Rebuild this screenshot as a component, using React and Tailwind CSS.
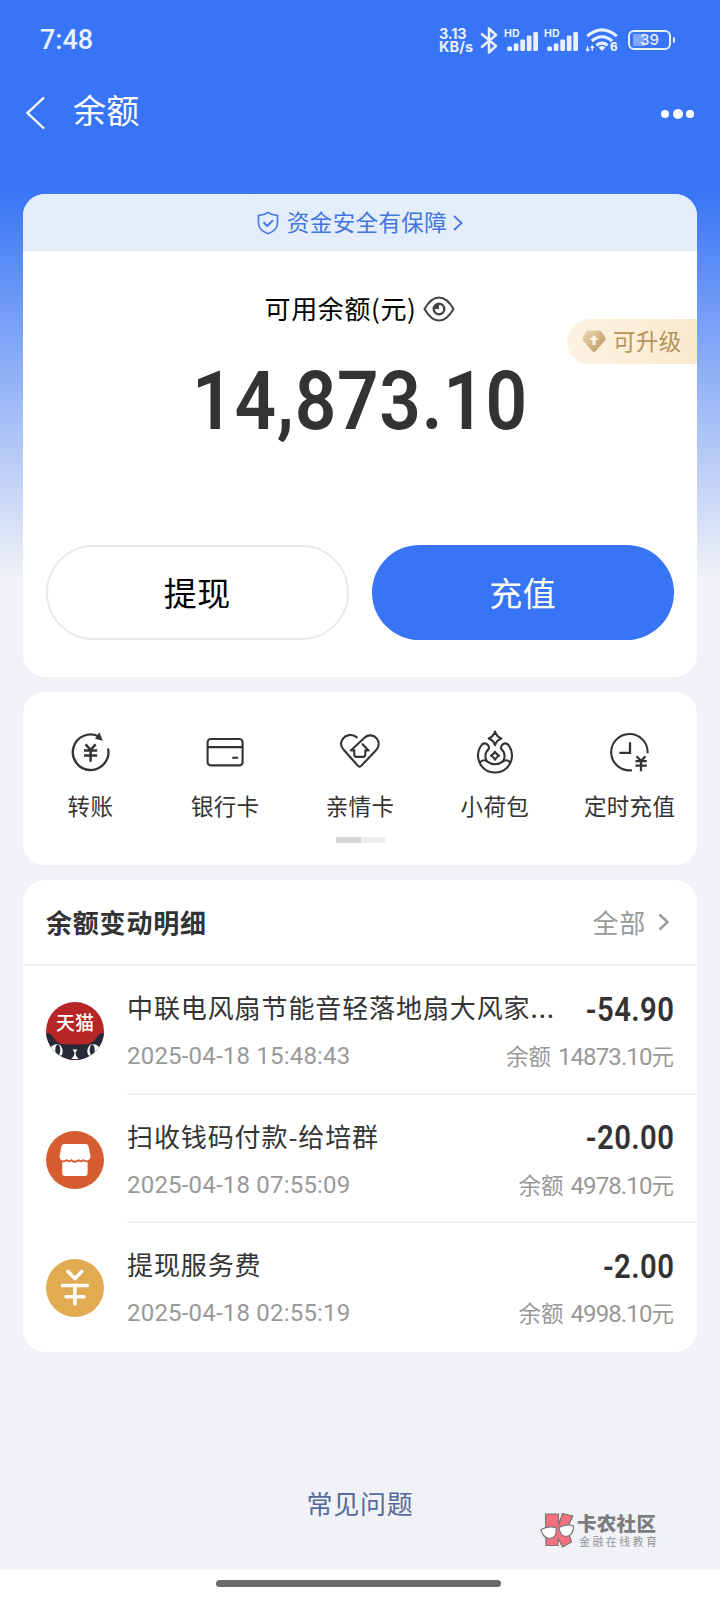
import React from 'react';

const services = [
  { label: '转账', Icon: TransferIcon },
  { label: '银行卡', Icon: BankCardIcon },
  { label: '亲情卡', Icon: FamilyIcon },
  { label: '小荷包', Icon: PurseIcon },
  { label: '定时充值', Icon: TimedIcon },
];

const records = [
  { title: '中联电风扇节能音轻落地扇大风家...', time: '2025-04-18 15:48:43', amount: '-54.90', balance: '14873.10', Icon: TmallIcon },
  { title: '扫收钱码付款-给培群', time: '2025-04-18 07:55:09', amount: '-20.00', balance: '4978.10', Icon: ShopIcon },
  { title: '提现服务费', time: '2025-04-18 02:55:19', amount: '-2.00', balance: '4998.10', Icon: FeeIcon },
];

function TransferIcon() {
  return (
    <svg className="w-10 h-10 overflow-visible" viewBox="0 0 40 40" fill="none" stroke="#333" strokeWidth="2.3">
      <path d="M38 16.4A17.8 17.8 0 1 1 29.500 4.8" />
      <path d="M29.400 .2L32.800 8.800L25 6.800z" fill="#333" stroke="none" />
      <path d="M15.600 12.400L20.600 17.800L25.600 12.400M14 18.600H27.200M14 23.400H27.200M20.600 18V29.800" strokeWidth="2.500" />
    </svg>
  );
}

function BankCardIcon() {
  return (
    <svg className="w-10 h-10" viewBox="0 0 40 40" fill="none" stroke="#333" strokeWidth="2.1">
      <rect x="2.600" y="7" width="35" height="26.400" rx="3.200" />
      <path d="M2.600 15.100H37.600M27.200 25.800H33.200" />
    </svg>
  );
}

function FamilyIcon() {
  return (
    <svg className="w-10 h-10 overflow-visible" viewBox="0 0 40 40" fill="none" stroke="#333" strokeWidth="2.1" strokeLinecap="round" strokeLinejoin="round">
      <path d="M16.8 5.3C11.6 1.4 5.6 3 3 6.6C.2 10.4 .6 14.6 3.9 18L17.6 33.4Q19.5 36 21.6 33.4L36 18.2C39.2 14.6 39.6 10 36.8 6.6C33.6 2.8 28.4 2.3 24.8 5.4L10.8 18.4H14.3V22.8Q14.3 24.9 16.4 24.9H23.2Q25.3 24.9 25.3 22.8V18.4H28.6L22.6 12.2" />
    </svg>
  );
}

function PurseIcon() {
  return (
    <svg className="w-10 h-10 overflow-visible" viewBox="0 0 40 40" fill="none" stroke="#333" strokeWidth="2.1" strokeLinejoin="round">
      <path d="M20 -.4Q21.4 4.8 26.4 6.4Q21.4 8 20 13.2Q18.6 8 13.6 6.4Q18.6 4.8 20 -.4z" />
      <path d="M7 12.6A17 17 0 1 0 33 12.6C30 10 25.600 12.200 26 16.400C28 18.400 29.600 20.600 29.600 24Q29.600 27 27.800 29.400M7 12.6C10 10 14.400 12.200 14 16.400C12 18.400 10.400 20.600 10.400 24Q10.400 27 12.200 29.400" />
      <path d="M4.600 30.600Q8.200 26.600 12 29.400Q15.600 32.200 20 32.200T28 29.400Q31.800 26.600 35.400 30.600" />
      <path d="M20 19.700Q21.400 22.200 24 23.700Q21.400 25.200 20 27.700Q18.600 25.200 16 23.700Q18.600 22.200 20 19.700z" />
    </svg>
  );
}

function TimedIcon() {
  return (
    <svg className="w-10 h-10 overflow-visible" viewBox="0 0 40 40" fill="none" stroke="#333" strokeWidth="2.1">
      <path d="M37.600 21.200A18.200 18.200 0 1 0 22 38.200" />
      <path d="M20 10.200V20.900H9.400" strokeWidth="2.300" />
      <path d="M26.600 24.200L31 29L35.400 24.200M25.400 29.200H36.800M25.400 33.600H36.800M31 29V39.200" strokeWidth="2.300" />
    </svg>
  );
}

function TmallIcon() {
  return (
    <div className="relative w-[58px] h-[58px] rounded-full overflow-hidden bg-[#b72626]">
      <svg className="absolute inset-0" viewBox="0 0 58 58">
        <path d="M0 31Q4 30.600 6 33.500Q10 40.500 15 42Q29 43 43 42Q49 39 52 33.500Q54 30.600 58 31V58H0z" fill="#262938" />
        <path d="M3 47Q8 40.500 14 43Q18 47 16 53Q10 57 3 47zM55 47Q50 40.500 44 43Q40 47 42 53Q48 57 55 47z" fill="#fff" />
        <ellipse cx="11.800" cy="48" rx="2.500" ry="5.500" fill="#262938" />
        <ellipse cx="46.200" cy="48" rx="2.500" ry="5.500" fill="#262938" />
        <path d="M26.500 47.500H31.500L29.700 50V53L32.500 57H25.500L28.300 53V50z" fill="#fff" />
      </svg>
      <span className="absolute left-0 top-2 w-full text-center text-[19px] leading-6 font-medium text-white">天猫</span>
    </div>
  );
}

function ShopIcon() {
  return (
    <svg className="w-[58px] h-[58px]" viewBox="0 0 58 58">
      <circle cx="29" cy="29" r="29" fill="#d65d30" />
      <path d="M18.500 13H39.500Q42 13 42.600 15.400L44.400 25Q44.400 29 41 29.400Q38.400 29.400 37.200 28Q35 30.600 32.600 28Q29 31.500 25.200 28Q23 30.600 20.600 28Q19.400 29.400 16.600 29.400Q13.400 29 13.600 25L15.400 15.400Q16 13 18.500 13z" fill="#fff" />
      <path d="M16.200 31.300Q18.600 31.400 20.600 30.200Q23 32.400 25.200 30.200Q29 33.400 32.600 30.200Q35 32.400 37.200 30.200Q39.200 31.400 41.600 31.300V42.600Q41.600 45 39.200 45H18.600Q16.200 45 16.200 42.600z" fill="#fff" />
    </svg>
  );
}

function FeeIcon() {
  return (
    <svg className="w-[58px] h-[58px]" viewBox="0 0 58 58" fill="none" stroke="#fff" strokeWidth="3.500" strokeLinecap="round" strokeLinejoin="round">
      <circle cx="29" cy="29" r="29" fill="#e1ab52" stroke="none" />
      <path d="M22 12.400L28.900 19.400L35.800 12.400M16.400 26.600H41.400M20 37.700H38M28.900 26.600V45" />
    </svg>
  );
}

function Signal() {
  return (
    <svg className="w-[34px] h-6" viewBox="0 0 34 24" fill="#e9f0ff">
      <text x="0" y="9.300" fontSize="10.800" fontWeight="700" fontFamily="Inter" textLength="15.500" lengthAdjust="spacingAndGlyphs">HD</text>
      <rect x="3.300" y="18.500" width="4.700" height="4.500" rx="1.200" />
      <rect x="9.800" y="15.500" width="4.700" height="7.500" rx="1.200" />
      <rect x="16.300" y="11.500" width="4.700" height="11.500" rx="1.200" />
      <rect x="22.800" y="7.500" width="4.700" height="15.500" rx="1.200" />
      <rect x="29.300" y="4" width="4.700" height="19" rx="1.200" />
    </svg>
  );
}

function StatusBar() {
  return (
    <div className="h-20 pl-10 pr-[45px] flex items-center justify-between text-[#e9f0ff]">
      <span className="text-[27px] leading-8 font-medium font-['Roboto']">7:48</span>
      <div className="flex items-center">
        <div className="w-[41px] flex flex-col font-['Inter'] font-bold text-[14.5px] leading-[13px] whitespace-nowrap">
          <span className="tracking-[-0.2px]">3.13</span>
          <span className="tracking-[0.1px]">KB/s</span>
        </div>
        <svg className="w-[18px] h-[27px] mr-1.5" viewBox="0 0 18 27" fill="none" stroke="#e9f0ff" strokeWidth="2.500" strokeLinejoin="round">
          <path d="M1.200 6.500L16 19L9 25.500V1.500L16 8L1.200 20.500" />
        </svg>
        <Signal />
        <div className="w-1.5" />
        <Signal />
        <svg className="w-8 h-6 ml-2 mr-2.5 overflow-visible" viewBox="0 0 32 24" fill="none" stroke="#e9f0ff" strokeWidth="3">
          <path d="M1.200 8.200Q16 -4.400 30.800 8.200M5.800 13Q16 4.600 26.200 13M10.400 17.200Q16 13 21.600 17.200" />
          <path d="M12.500 19.500Q16 16.500 19.500 19.500L16 23z" fill="#e9f0ff" stroke="none" />
          <path d="M1.500 18V22.500M0 21L1.700 23L3.300 21M6.200 23V18.200M4.800 20L6.200 18L8 20" strokeWidth="1.300" />
          <text x="24" y="23" fontSize="11.500" fontWeight="800" fontFamily="Inter" fill="#e9f0ff" stroke="none">6</text>
        </svg>
        <div className="relative w-[43px] h-5 rounded-md border-2 border-[#e9f0ff] overflow-hidden flex items-center justify-center">
          <div className="absolute left-[3px] top-0.5 bottom-0.5 w-3 rounded-l-[2px] bg-[#7fa6fc]" />
          <span className="relative font-['Inter'] text-[15px] leading-4 font-medium">39</span>
        </div>
        <div className="w-0.5 h-1.5 ml-0.5 rounded-r bg-[#e9f0ff]" />
      </div>
    </div>
  );
}

function NavBar() {
  return (
    <div className="h-[114px] pl-[25px] pr-[26px] pt-3 flex items-start justify-between">
      <div className="flex items-center">
        <svg className="w-5 h-[34px] mt-1" viewBox="0 0 20 34" fill="none" stroke="#fff" strokeWidth="2.400">
          <path d="M19 1.500L2.500 17L19 32.500" />
        </svg>
        <h1 className="ml-7 text-[33px] leading-8 text-white tracking-[0.3px] -mt-1">余额</h1>
      </div>
      <div className="mt-[17px] flex items-center gap-[3.5px]">
        <span className="w-2 h-2 rounded-full bg-white" />
        <span className="w-2.5 h-2.5 rounded-full bg-white" />
        <span className="w-2 h-2 rounded-full bg-white" />
      </div>
    </div>
  );
}

function BalanceCard() {
  return (
    <section className="relative h-[483px] rounded-[22px] bg-white overflow-hidden">
      <div className="h-[57px] bg-[#e4eefb] flex items-center justify-center text-[#4275e0]">
        <svg className="w-[22px] h-6" viewBox="0 0 22 24" fill="none" stroke="#4b7ce4" strokeWidth="1.700" strokeLinejoin="round">
          <path d="M11 1.300Q14.500 4 20.500 4.300V12.500Q20 19.500 11 22.700Q2 19.500 1.500 12.500V4.300Q7.500 4 11 1.300z" />
          <path d="M6.500 11.200L10.200 15L16 9.200" strokeWidth="2" />
        </svg>
        <span className="ml-2 text-[22.5px] leading-8 tracking-[0.4px] pb-[3px]">资金安全有保障</span>
        <svg className="w-2.5 h-4 ml-1.5" viewBox="0 0 10 16" fill="none" stroke="#4275e0" strokeWidth="1.800">
          <path d="M1 1L8.500 8L1 15" />
        </svg>
      </div>

      <div className="mt-[37px] h-10 flex items-center justify-center text-black">
        <span className="text-[26px] leading-10 tracking-[0.6px]">可用余额(元)</span>
        <svg className="w-8 h-[26px] ml-[7px] mt-0.5" viewBox="0 0 32 26" fill="none" stroke="#444" strokeWidth="2">
          <path d="M1.500 13Q8 1.500 16 1.500T30.500 13Q24 24.500 16 24.500T1.500 13z" strokeLinejoin="round" />
          <circle cx="16" cy="13" r="5.300" strokeWidth="2.400" />
          <path d="M16 8V13H11A5 5 0 0 1 16 8z" fill="#444" stroke="none" />
        </svg>
      </div>

      <div className="mt-[29px] h-[90px] flex items-center justify-center font-['Roboto'] font-semibold text-[81px] leading-[90px] tracking-[0.8px] scale-x-90 text-[#333]">
        14,873.10
      </div>

      <div className="mt-[98px] px-[23px] grid grid-cols-2 gap-[23px]">
        <button className="h-[95px] rounded-full border-2 border-[#e9e9e9] text-[33px] text-black tracking-[0.5px]">提现</button>
        <button className="h-[95px] rounded-full bg-[#3875f6] text-[33px] text-white tracking-[0.5px]">充值</button>
      </div>

      {/* upgrade tag pinned to the card's right edge */}
      <div className="absolute right-0 top-[125px] w-[130px] h-[45px] rounded-l-full bg-linear-to-r from-[#fcf2e2] to-[#fbe9cd] flex items-center pl-[15px]">
        <svg className="w-6 h-[23px]" viewBox="0 0 24 23">
          <defs>
            <linearGradient id="gem" x1="0" y1="0" x2="1" y2="1">
              <stop offset="0" stopColor="#ecd9b4" />
              <stop offset="1" stopColor="#b8935a" />
            </linearGradient>
          </defs>
          <path d="M6.500 .5H17.500Q19 .5 20 2L23.300 7.500Q24 9 23 10.500L13.200 21.800Q12 23 10.800 21.800L1 10.500Q0 9 .7 7.500L4 2Q5 .5 6.500 .5z" fill="url(#gem)" />
          <path d="M12 5L16.500 10H13.600V15H10.400V10H7.500z" fill="#fdf3e2" />
        </svg>
        <span className="ml-[7px] text-[22.5px] leading-8 tracking-[0.4px] pb-[3px] text-[#b6935a]">可升级</span>
      </div>
    </section>
  );
}

function ServiceCard() {
  return (
    <section className="mt-[15px] h-[173px] rounded-[22px] bg-white flex flex-col items-center">
      <div className="w-full grid grid-cols-5 pt-10">
        {services.map(({ label, Icon }) => (
          <div key={label} className="flex flex-col items-center">
            <Icon />
            <span className="mt-[17px] text-[22.5px] leading-8 tracking-[0.3px] text-[#333] whitespace-nowrap">{label}</span>
          </div>
        ))}
      </div>
      <div className="mt-4 w-[49px] h-[6px] bg-[#eee]">
        <div className="w-[25px] h-full bg-[#d5d5d5]" />
      </div>
    </section>
  );
}

function RecordCard() {
  return (
    <section className="mt-[15px] h-[472px] rounded-[22px] bg-white overflow-hidden">
      <div className="h-[86px] border-b-2 border-[#f1f1f3] px-[23px] flex items-center justify-between">
        <h2 className="text-[26px] leading-10 font-bold tracking-[0.8px] text-[#333]">余额变动明细</h2>
        <div className="flex items-center text-[#999]">
          <span className="text-[26px] leading-10 tracking-[0.7px]">全部</span>
          <svg className="w-3 h-[18px] ml-3 mr-1" viewBox="0 0 12 18" fill="none" stroke="#999" strokeWidth="2.400">
            <path d="M1.500 1.500L9.500 9L1.500 16.500" />
          </svg>
        </div>
      </div>

      {records.map(({ title, time, amount, balance, Icon }, i) => (
        <div key={time} className="h-[128.6px] pl-[23px] flex">
          <div className="pt-9">
            <Icon />
          </div>
          <div className={`ml-[23px] flex-1 pr-[23px] pt-[21px] ${i < records.length - 1 ? 'border-b-2 border-[#f1f1f3]' : ''}`}>
            <div className="h-10 flex items-center justify-between whitespace-nowrap">
              <span className="text-[26px] leading-10 tracking-[0.9px] text-[#333]">{title}</span>
              <span className="mt-[5px] font-['Roboto'] font-semibold text-[32.5px] leading-10 tracking-[0.5px] scale-x-90 origin-right text-[#333]">{amount}</span>
            </div>
            <div className="mt-[13px] h-8 flex items-center justify-between whitespace-nowrap text-[#999]">
              <span className="font-['Roboto'] text-[24px] leading-8 tracking-[0.2px]">{time}</span>
              <span className="text-[22.5px] leading-8">
                余额 <span className="ml-0.5 font-['Roboto'] text-[24px] tracking-[-0.9px]">{balance}</span>元
              </span>
            </div>
          </div>
        </div>
      ))}
    </section>
  );
}

function Watermark() {
  return (
    <div className="absolute left-[540px] top-[1511px] flex items-start">
      <svg className="w-[36px] h-[38px]" viewBox="0 0 36 38" stroke="#777" strokeWidth="1.200" strokeLinejoin="round">
        <path d="M5.500 3H18.500V14L22.500 2.500L33 5L27 17L31.500 31L22.500 36L18 27V34.500H6z" fill="#f2707f" />
        <path d="M1 18.500Q8 14.500 16 16.500Q17.500 27 9 27.500Q3 27 1 18.500zM19 16.500Q26 12 33.500 15Q33.500 25 26 25.500Q20 25 19 16.500z" fill="#fff" />
      </svg>
      <div className="ml-px flex flex-col whitespace-nowrap">
        <span className="text-[19.5px] leading-6 font-black tracking-[0.3px] text-[#7c7c80]">卡农社区</span>
        <span className="ml-0.5 text-[11px] leading-3 tracking-[2.4px] text-[#949499]">金融在线教育</span>
      </div>
    </div>
  );
}

export default function App() {
  return (
    <div className="relative w-[720px] h-[1600px] overflow-hidden flex flex-col bg-[#f1f2f7] bg-[linear-gradient(to_bottom,#3875f6_190px,#f1f2f7_578px)] font-['Noto_Sans_CJK_SC',sans-serif]">
      <StatusBar />
      <NavBar />
      <main className="flex-1 px-[23px] flex flex-col">
        <BalanceCard />
        <ServiceCard />
        <RecordCard />
        <div className="mt-[131px] text-center text-[26px] leading-10 tracking-[0.7px] text-[#566b9c]">常见问题</div>
      </main>
      <div className="h-[30px] bg-white flex justify-center pt-2.5">
        <div className="w-[285px] h-[7px] mr-1 rounded-full bg-[#6a6a6a]" />
      </div>
      <Watermark />
    </div>
  );
}
